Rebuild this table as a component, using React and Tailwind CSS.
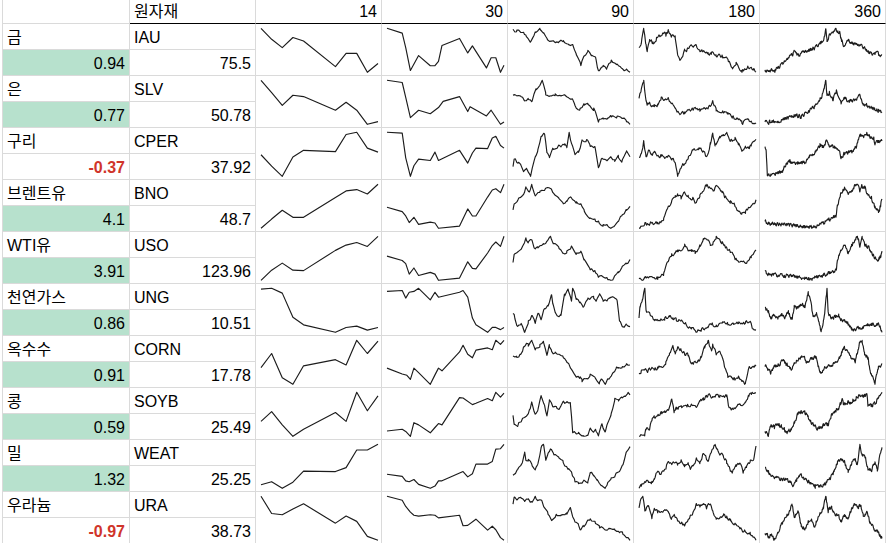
import React from "react";

// 14일 차트는 주말 자리를 비워둔 날짜축 (0..4, 7..11)
const X14 = [0, 1, 2, 3, 4, 7, 8, 9, 10, 11];

const COMMODITIES = [
    {
        name: "금", chg: 0.94, ticker: "IAU", price: "75.5",
        s14: [100, 75, 56, 79, 71, 13, 43, 43, 0, 20],
        s30: [[0, 100], [13, 89], [16, 56], [20, 4], [27, 38], [37, 15], [41, 15], [44, 25], [47, 61], [62, 77], [69, 44], [73, 60], [85, 10], [89, 33], [93, 33], [97, 0], [100, 16]],
        s90: [[0, 98], [3, 94], [9, 90], [11, 82], [15, 71], [19, 94], [23, 100], [26, 94], [29, 76], [33, 71], [39, 68], [43, 71], [47, 66], [51, 63], [54, 45], [58, 16], [61, 37], [64, 47], [67, 35], [71, 30], [73, 2], [77, 12], [80, 8], [84, 25], [89, 20], [93, 8], [97, 4], [100, 2]],
        s180: [[0, 56], [2, 68], [4, 100], [6, 64], [7, 50], [9, 75], [12, 68], [15, 79], [18, 83], [21, 94], [23, 86], [25, 95], [28, 83], [31, 80], [33, 38], [36, 30], [39, 50], [43, 58], [48, 62], [52, 53], [56, 49], [59, 43], [62, 47], [66, 41], [71, 38], [76, 32], [80, 11], [83, 23], [88, 5], [93, 13], [98, 8], [100, 0]],
        s360: [[0, 2], [5, 3], [8, 0], [11, 9], [15, 19], [19, 27], [24, 41], [25, 50], [28, 37], [33, 43], [38, 50], [42, 55], [47, 65], [50, 72], [52, 100], [53, 72], [55, 84], [57, 94], [61, 96], [64, 90], [65, 76], [68, 57], [71, 72], [75, 65], [80, 61], [84, 57], [88, 45], [91, 41], [95, 43], [100, 35]],
    },
    {
        name: "은", chg: 0.77, ticker: "SLV", price: "50.78",
        s14: [100, 72, 43, 66, 63, 32, 50, 32, 0, 6],
        s30: [[0, 100], [13, 95], [16, 61], [20, 15], [27, 32], [37, 24], [44, 38], [48, 52], [62, 63], [69, 29], [71, 40], [85, 19], [89, 32], [97, 0], [100, 5]],
        s90: [[0, 68], [7, 62], [10, 53], [13, 59], [16, 53], [20, 80], [25, 100], [28, 68], [31, 64], [36, 67], [40, 62], [44, 64], [50, 59], [53, 42], [57, 30], [61, 45], [64, 47], [69, 34], [73, 8], [77, 11], [81, 15], [84, 19], [89, 15], [93, 11], [97, 8], [100, 0]],
        s180: [[0, 62], [2, 80], [4, 100], [6, 53], [7, 45], [9, 49], [11, 38], [13, 42], [16, 45], [19, 61], [22, 58], [25, 58], [28, 48], [31, 36], [35, 21], [39, 27], [43, 30], [48, 36], [52, 32], [56, 39], [59, 34], [63, 53], [66, 34], [71, 30], [76, 23], [80, 15], [85, 11], [88, 4], [93, 8], [100, 0]],
        s360: [[0, 4], [8, 4], [17, 11], [25, 19], [31, 15], [37, 27], [42, 38], [47, 53], [50, 72], [52, 100], [53, 61], [55, 68], [58, 53], [61, 72], [65, 49], [68, 57], [72, 49], [77, 53], [81, 61], [84, 45], [88, 39], [92, 34], [97, 30], [100, 24]],
    },
    {
        name: "구리", chg: -0.37, ticker: "CPER", price: "37.92",
        s14: [49, 23, 0, 44, 59, 56, 95, 100, 64, 55],
        s30: [[0, 100], [13, 98], [16, 42], [20, 0], [23, 24], [27, 39], [37, 36], [41, 55], [44, 36], [62, 59], [69, 30], [73, 53], [76, 64], [86, 63], [90, 87], [93, 91], [97, 70], [100, 64]],
        s90: [[0, 21], [1, 38], [2, 38], [4, 27], [7, 24], [9, 9], [11, 17], [15, 0], [19, 38], [21, 57], [24, 92], [27, 98], [29, 53], [31, 42], [34, 61], [39, 68], [41, 64], [44, 72], [46, 67], [48, 98], [50, 72], [53, 49], [56, 53], [59, 80], [63, 80], [66, 68], [70, 64], [73, 15], [76, 38], [80, 32], [84, 39], [87, 34], [90, 42], [93, 30], [97, 59], [100, 47]],
        s180: [[0, 40], [2, 50], [4, 77], [6, 42], [8, 58], [11, 46], [13, 54], [16, 42], [19, 46], [22, 38], [25, 42], [28, 38], [31, 31], [33, 0], [35, 15], [38, 25], [42, 38], [46, 58], [51, 60], [55, 54], [58, 40], [61, 73], [63, 96], [65, 69], [69, 85], [72, 92], [75, 100], [78, 77], [82, 85], [85, 73], [88, 50], [91, 63], [94, 62], [96, 69], [100, 77]],
        s360: [[0, 67], [1, 61], [2, 2], [5, 2], [11, 8], [15, 11], [18, 27], [21, 34], [25, 29], [30, 32], [34, 30], [38, 45], [41, 49], [44, 62], [47, 72], [50, 68], [53, 83], [55, 72], [58, 68], [63, 64], [65, 42], [68, 53], [71, 55], [74, 57], [78, 68], [81, 97], [84, 91], [87, 98], [90, 91], [93, 87], [94, 76], [97, 80], [100, 83]],
    },
    {
        name: "브렌트유", chg: 4.1, ticker: "BNO", price: "48.7",
        s14: [0, 21, 41, 25, 25, 70, 85, 88, 78, 100],
        s30: [[0, 48], [13, 38], [16, 28], [19, 13], [23, 25], [27, 9], [37, 14], [41, 12], [44, 0], [62, 5], [69, 44], [73, 28], [76, 28], [86, 71], [90, 87], [93, 90], [97, 81], [100, 100]],
        s90: [[0, 38], [1, 54], [4, 62], [9, 72], [11, 95], [14, 81], [16, 98], [19, 69], [23, 81], [27, 88], [31, 92], [34, 81], [39, 69], [43, 56], [46, 62], [50, 69], [54, 56], [58, 52], [61, 35], [66, 19], [70, 15], [73, 12], [77, 4], [81, 2], [86, 0], [90, 15], [93, 27], [97, 38], [100, 44]],
        s180: [[0, 0], [5, 6], [10, 8], [16, 8], [21, 16], [25, 45], [28, 59], [31, 71], [33, 76], [36, 69], [39, 83], [42, 75], [44, 63], [46, 69], [49, 55], [52, 75], [55, 87], [58, 100], [61, 89], [63, 84], [66, 97], [71, 83], [73, 73], [78, 61], [82, 51], [85, 37], [88, 34], [91, 35], [94, 45], [98, 57], [100, 63]],
        s360: [[0, 14], [3, 8], [8, 6], [17, 6], [25, 3], [34, 2], [40, 0], [45, 3], [50, 10], [55, 16], [61, 26], [62, 50], [65, 78], [68, 86], [71, 74], [74, 82], [77, 94], [79, 100], [81, 82], [83, 94], [85, 89], [88, 74], [91, 66], [94, 46], [97, 35], [99, 50], [100, 66]],
    },
    {
        name: "WTI유", chg: 3.91, ticker: "USO", price: "123.96",
        s14: [0, 23, 39, 23, 22, 68, 80, 86, 77, 100],
        s30: [[0, 55], [13, 45], [16, 38], [19, 14], [23, 28], [27, 11], [37, 18], [41, 14], [44, 0], [62, 5], [69, 42], [73, 27], [76, 26], [86, 62], [90, 79], [93, 87], [97, 77], [100, 100]],
        s90: [[0, 39], [1, 58], [4, 62], [7, 68], [11, 92], [13, 81], [16, 86], [19, 65], [21, 69], [26, 81], [29, 85], [32, 98], [34, 81], [39, 70], [43, 55], [46, 62], [50, 73], [54, 58], [58, 62], [61, 43], [66, 23], [70, 17], [73, 5], [77, 5], [81, 0], [86, 0], [90, 17], [93, 28], [97, 36], [100, 41]],
        s180: [[0, 0], [5, 5], [10, 5], [16, 5], [21, 13], [25, 44], [28, 59], [31, 65], [33, 71], [36, 63], [39, 82], [42, 71], [45, 67], [48, 63], [52, 78], [55, 94], [58, 98], [61, 82], [63, 82], [66, 98], [71, 86], [73, 78], [78, 67], [82, 52], [85, 44], [88, 40], [92, 44], [96, 55], [100, 65]],
        s360: [[0, 16], [3, 9], [8, 8], [17, 6], [25, 4], [34, 0], [40, 0], [45, 4], [50, 9], [55, 12], [61, 20], [62, 47], [65, 66], [68, 82], [71, 59], [74, 78], [77, 90], [79, 100], [81, 78], [83, 94], [85, 82], [88, 74], [91, 63], [94, 47], [97, 43], [99, 53], [100, 66]],
    },
    {
        name: "천연가스", chg: 0.86, ticker: "UNG", price: "10.51",
        s14: [98, 100, 89, 34, 17, 0, 11, 14, 5, 11],
        s30: [[0, 92], [13, 94], [16, 77], [19, 90], [23, 92], [27, 99], [37, 73], [41, 90], [44, 79], [62, 90], [65, 94], [69, 79], [73, 32], [76, 17], [86, 0], [90, 11], [93, 11], [97, 6], [100, 11]],
        s90: [[0, 41], [1, 38], [4, 15], [7, 19], [10, 4], [13, 26], [16, 38], [19, 23], [22, 45], [24, 34], [27, 56], [30, 64], [33, 86], [34, 68], [37, 41], [41, 41], [44, 83], [47, 94], [50, 71], [51, 99], [54, 75], [57, 68], [60, 56], [64, 75], [69, 79], [71, 75], [74, 83], [77, 71], [81, 75], [86, 79], [89, 75], [91, 26], [94, 15], [97, 19], [100, 17]],
        s180: [[0, 31], [1, 59], [3, 75], [5, 100], [6, 47], [9, 39], [13, 28], [18, 24], [22, 29], [26, 35], [29, 31], [32, 26], [36, 24], [40, 16], [45, 6], [49, 0], [53, 4], [56, 8], [59, 12], [63, 16], [66, 12], [71, 20], [73, 21], [76, 18], [81, 20], [85, 21], [91, 20], [95, 20], [97, 6], [100, 2]],
        s360: [[0, 55], [3, 47], [5, 31], [8, 39], [11, 28], [14, 43], [17, 31], [20, 47], [23, 28], [25, 59], [28, 55], [31, 67], [34, 59], [37, 91], [39, 71], [41, 35], [44, 43], [47, 12], [48, 0], [50, 24], [51, 43], [53, 100], [54, 43], [57, 31], [60, 35], [63, 39], [66, 24], [68, 28], [71, 20], [74, 8], [77, 4], [80, 12], [83, 8], [86, 20], [88, 16], [91, 20], [94, 16], [97, 20], [100, 2]],
    },
    {
        name: "옥수수", chg: 0.91, ticker: "CORN", price: "17.78",
        s14: [38, 70, 15, 0, 42, 56, 44, 100, 70, 98],
        s30: [[0, 36], [13, 23], [17, 20], [20, 11], [23, 36], [27, 26], [37, 0], [41, 21], [44, 36], [47, 30], [62, 72], [65, 87], [69, 67], [73, 59], [76, 76], [86, 81], [90, 77], [93, 98], [97, 89], [100, 98]],
        s90: [[0, 61], [3, 64], [6, 68], [9, 83], [11, 91], [13, 87], [16, 100], [19, 76], [23, 87], [26, 95], [29, 64], [31, 85], [33, 76], [36, 70], [40, 64], [43, 59], [46, 53], [50, 38], [53, 21], [57, 19], [59, 11], [63, 17], [66, 23], [70, 15], [74, 8], [76, 15], [79, 0], [81, 11], [84, 23], [88, 39], [90, 38], [93, 42], [97, 45], [100, 47]],
        s180: [[0, 27], [2, 35], [5, 38], [8, 35], [11, 42], [13, 38], [16, 40], [21, 46], [23, 54], [26, 73], [29, 85], [31, 71], [33, 85], [36, 81], [39, 73], [42, 68], [45, 48], [48, 54], [51, 58], [53, 65], [56, 85], [59, 100], [62, 77], [63, 92], [66, 73], [69, 81], [73, 45], [76, 23], [79, 19], [82, 17], [85, 23], [88, 12], [91, 8], [94, 42], [96, 38], [100, 48]],
        s360: [[0, 42], [3, 31], [5, 23], [8, 38], [13, 46], [15, 55], [18, 46], [23, 32], [25, 46], [30, 58], [33, 65], [35, 50], [40, 58], [44, 60], [47, 23], [51, 35], [55, 38], [60, 50], [64, 58], [65, 69], [67, 81], [68, 85], [71, 73], [74, 58], [77, 50], [80, 85], [81, 96], [83, 100], [85, 69], [88, 58], [90, 23], [92, 15], [94, 0], [97, 38], [99, 42], [100, 50]],
    },
    {
        name: "콩", chg: 0.59, ticker: "SOYB", price: "25.49",
        s14: [34, 56, 26, 0, 16, 54, 34, 100, 58, 92],
        s30: [[0, 12], [13, 16], [16, 11], [20, 0], [23, 31], [27, 26], [37, 8], [41, 20], [44, 29], [47, 26], [62, 88], [65, 87], [73, 72], [76, 75], [86, 86], [90, 81], [93, 100], [97, 89], [100, 98]],
        s90: [[0, 47], [1, 29], [4, 26], [7, 35], [11, 47], [14, 58], [16, 77], [19, 50], [21, 58], [24, 89], [27, 69], [29, 47], [31, 81], [34, 69], [37, 67], [40, 62], [43, 77], [46, 77], [49, 77], [50, 50], [51, 8], [56, 5], [60, 2], [64, 3], [66, 16], [69, 5], [71, 12], [73, 1], [76, 27], [79, 8], [81, 31], [84, 50], [87, 85], [90, 81], [93, 89], [96, 92], [98, 100], [100, 95]],
        s180: [[0, 4], [2, 8], [5, 4], [6, 15], [9, 19], [11, 38], [13, 42], [16, 46], [19, 52], [22, 54], [25, 59], [28, 81], [30, 54], [32, 62], [36, 65], [41, 69], [45, 72], [49, 69], [52, 77], [55, 81], [58, 88], [61, 92], [63, 85], [66, 92], [69, 88], [72, 90], [75, 88], [77, 62], [81, 62], [85, 69], [88, 67], [91, 73], [94, 92], [96, 96], [100, 100]],
        s360: [[0, 15], [3, 4], [5, 27], [8, 23], [11, 28], [14, 25], [17, 15], [19, 12], [23, 18], [25, 31], [28, 50], [31, 56], [34, 54], [37, 46], [40, 31], [42, 25], [45, 19], [48, 23], [51, 28], [54, 27], [57, 50], [60, 58], [63, 65], [66, 81], [67, 73], [70, 75], [73, 77], [75, 81], [78, 85], [81, 92], [84, 88], [87, 92], [88, 69], [91, 69], [94, 73], [97, 88], [100, 100]],
    },
    {
        name: "밀", chg: 1.32, ticker: "WEAT", price: "25.25",
        s14: [8, 15, 0, 14, 39, 38, 47, 87, 87, 100],
        s30: [[0, 32], [13, 27], [16, 17], [19, 15], [23, 20], [27, 9], [37, 0], [41, 5], [44, 17], [47, 17], [65, 38], [69, 26], [73, 33], [76, 55], [86, 55], [90, 61], [93, 89], [97, 90], [100, 100]],
        s90: [[0, 28], [2, 36], [4, 43], [8, 58], [10, 81], [11, 62], [13, 64], [16, 55], [19, 39], [21, 50], [24, 92], [26, 100], [28, 66], [30, 77], [32, 91], [35, 77], [39, 71], [43, 58], [47, 43], [50, 33], [53, 17], [56, 13], [60, 17], [64, 13], [66, 38], [69, 28], [72, 20], [76, 9], [79, 0], [81, 13], [84, 24], [88, 32], [91, 36], [94, 51], [97, 85], [100, 92]],
        s180: [[0, 0], [2, 8], [5, 12], [8, 17], [11, 15], [13, 19], [16, 42], [18, 31], [21, 38], [23, 48], [25, 65], [28, 54], [31, 62], [33, 58], [36, 63], [39, 52], [42, 58], [44, 42], [46, 50], [49, 69], [52, 58], [55, 81], [57, 77], [59, 58], [62, 85], [65, 100], [67, 88], [69, 81], [72, 77], [75, 60], [78, 42], [80, 38], [83, 50], [86, 58], [89, 38], [92, 50], [95, 62], [98, 69], [100, 94]],
        s360: [[0, 47], [3, 35], [5, 27], [8, 23], [13, 19], [15, 16], [18, 19], [21, 12], [24, 4], [27, 16], [29, 27], [31, 31], [33, 20], [37, 12], [40, 8], [43, 0], [45, 4], [50, 4], [53, 12], [55, 16], [58, 31], [62, 59], [65, 63], [68, 59], [71, 35], [74, 55], [77, 66], [79, 51], [81, 100], [83, 74], [85, 78], [88, 43], [91, 39], [94, 59], [96, 39], [98, 70], [100, 95]],
    },
    {
        name: "우라늄", chg: -0.97, ticker: "URA", price: "38.73",
        s14: [100, 61, 58, 71, 83, 39, 55, 43, 9, 0],
        s30: [[0, 100], [13, 91], [16, 77], [20, 64], [23, 57], [27, 55], [37, 58], [41, 57], [44, 51], [62, 57], [65, 33], [69, 34], [76, 48], [86, 23], [90, 32], [93, 24], [97, 6], [100, 0]],
        s90: [[0, 80], [1, 98], [4, 91], [7, 95], [10, 87], [13, 95], [16, 87], [19, 98], [21, 87], [24, 91], [27, 72], [30, 61], [33, 49], [37, 57], [41, 61], [46, 62], [49, 76], [51, 57], [53, 45], [56, 38], [58, 23], [60, 30], [63, 42], [66, 49], [70, 44], [74, 30], [77, 27], [81, 27], [87, 23], [91, 19], [94, 15], [97, 11], [100, 2]],
        s180: [[0, 75], [1, 87], [3, 100], [5, 67], [8, 75], [11, 47], [13, 71], [16, 63], [19, 59], [22, 71], [25, 63], [28, 47], [30, 55], [33, 43], [36, 35], [39, 31], [42, 47], [46, 59], [49, 79], [52, 75], [55, 83], [58, 71], [61, 83], [63, 63], [66, 43], [69, 51], [72, 55], [75, 51], [78, 43], [81, 31], [83, 35], [86, 28], [90, 16], [95, 12], [97, 8], [100, 0]],
        s360: [[0, 17], [3, 8], [5, 10], [8, 0], [11, 17], [15, 38], [18, 54], [21, 63], [23, 83], [25, 54], [28, 67], [31, 33], [34, 25], [37, 42], [40, 46], [42, 29], [44, 42], [47, 58], [50, 75], [52, 100], [54, 67], [57, 75], [60, 58], [63, 54], [65, 42], [68, 58], [71, 50], [74, 71], [77, 83], [80, 75], [82, 79], [84, 54], [87, 63], [90, 38], [93, 25], [96, 21], [98, 12], [100, 4]],
    },
];

const PERIODS = ["14", "30", "90", "180", "360"];

function makeRng(seed) {
    let s = seed >>> 0;
    return () => {
        s = (s + 0x6d2b79f5) >>> 0;
        let t = s;
        t = Math.imul(t ^ (t >>> 15), t | 1);
        t ^= t + Math.imul(t ^ (t >>> 7), t | 61);
        return ((t ^ (t >>> 14)) >>> 0) / 4294967296;
    };
}

function interp(pts, x) {
    for (let i = 1; i < pts.length; i++) {
        if (x <= pts[i][0]) {
            const [x0, y0] = pts[i - 1];
            const [x1, y1] = pts[i];
            const t = x1 === x0 ? 0 : (x - x0) / (x1 - x0);
            return y0 + (y1 - y0) * t;
        }
    }
    return pts[pts.length - 1][1];
}

// 긴 기간은 앵커 사이를 잘게 채우고 잔 흔들림을 넣는다
function densify(pts, n, amp, seed) {
    const rand = makeRng(seed);
    const xs = new Set(pts.map((p) => p[0]));
    for (let i = 0; i < n; i++) xs.add((i / (n - 1)) * 100);
    const sorted = [...xs].sort((a, b) => a - b);
    let e = 0;
    return sorted.map((x) => {
        e = e * 0.35 + (rand() - 0.5) * amp;
        return [x, interp(pts, x) + e];
    });
}

function seriesFor(row, period, idx) {
    if (period === "14") return row.s14.map((v, i) => [(X14[i] / 11) * 100, v]);
    if (period === "30") return row.s30;
    if (period === "90") return densify(row.s90, 62, 7, idx * 7 + 1);
    if (period === "180") return densify(row.s180, 124, 8, idx * 7 + 2);
    return densify(row.s360, 250, 8, idx * 7 + 3);
}

function Sparkline({ pts }) {
    const vals = pts.map((p) => p[1]);
    const min = Math.min(...vals);
    const max = Math.max(...vals);
    const span = max - min || 1;
    const d = pts
        .map(([x, v], i) => {
            const px = 1 + x * 1.17;
            const py = 1.3 + (1 - (v - min) / span) * 44;
            return `${i ? "L" : "M"}${px.toFixed(2)} ${py.toFixed(2)}`;
        })
        .join("");
    return (
        <svg width="119" height="47" className="block ml-[4px] mt-[3px]">
            <path d={d} fill="none" stroke="#1c1c1c" strokeWidth="1.15" strokeLinejoin="round" />
        </svg>
    );
}

function App() {
    return (
        <div
            className="w-[886px] h-[543px] overflow-hidden bg-white pl-[2px] text-[16px] leading-[18px] text-black"
            style={{ fontFamily: '"Liberation Sans", Arial, "Noto Sans CJK KR", sans-serif' }}
        >
            <div className="flex">
                <div className="w-[128px] h-[24px] border-l border-r border-b border-[#dadada]" />
                <div className="w-[126px] h-[24px] border-r border-[#dadada] border-b border-b-black flex items-end px-[4px] pb-[2px]">
                    원자재
                </div>
                {PERIODS.map((p) => (
                    <div
                        key={p}
                        className="w-[126px] h-[24px] border-r border-[#dadada] border-b border-b-black flex items-end justify-end pr-[4px] pb-[2px]"
                    >
                        {p}
                    </div>
                ))}
            </div>
            {COMMODITIES.map((row, idx) => (
                <div className="flex" key={row.ticker}>
                    <div className="w-[128px] border-l border-r border-[#dadada]">
                        <div className="h-[26px] border-b border-[#dadada] flex items-end px-[4px] pb-[2px]">
                            {row.name}
                        </div>
                        <div
                            className={
                                row.chg < 0
                                    ? "h-[26px] border-b border-[#dadada] flex items-end justify-end pr-[4px] pb-[2px] font-bold text-[#d0352a]"
                                    : "h-[26px] border-b border-[#dadada] flex items-end justify-end pr-[4px] pb-[2px] bg-[#b7e1cd]"
                            }
                        >
                            {row.chg}
                        </div>
                    </div>
                    <div className="w-[126px] border-r border-[#dadada]">
                        <div className="h-[26px] border-b border-[#dadada] flex items-end px-[4px] pb-[2px]">
                            {row.ticker}
                        </div>
                        <div className="h-[26px] border-b border-[#dadada] flex items-end justify-end pr-[4px] pb-[2px]">
                            {row.price}
                        </div>
                    </div>
                    {PERIODS.map((p) => (
                        <div key={p} className="w-[126px] h-[52px] border-r border-b border-[#dadada]">
                            <Sparkline pts={seriesFor(row, p, idx)} />
                        </div>
                    ))}
                </div>
            ))}
        </div>
    );
}

export default App;
